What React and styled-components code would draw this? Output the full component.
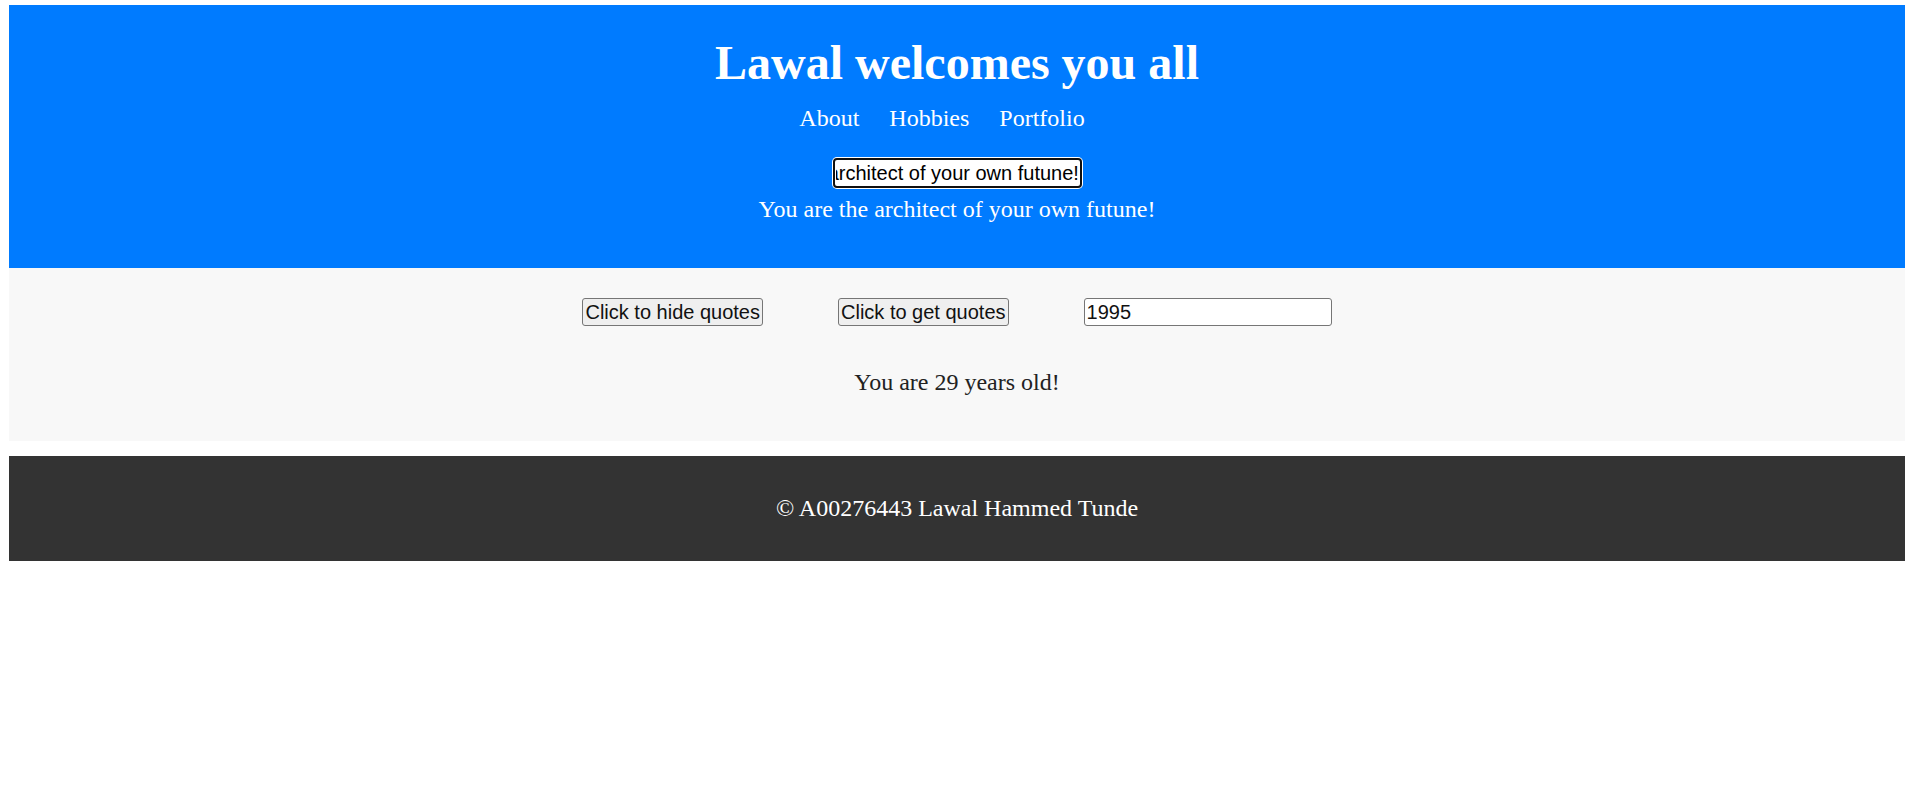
import React, { useLayoutEffect, useRef } from 'react';
import styled, { createGlobalStyle } from 'styled-components';

const GlobalStyle = createGlobalStyle`
  html, body {
    background: #ffffff;
  }
  body {
    margin: 5px 4px 0 9px;
    font-family: "Liberation Serif", "Times New Roman", serif;
  }
  * {
    box-sizing: border-box;
  }
`;

const Header = styled.header`
  background: #007bff;
  color: #ffffff;
  display: flex;
  flex-direction: column;
  align-items: center;
  padding: 30px 0 45px;
`;

const Title = styled.h1`
  margin: 0;
  font-size: 48px;
  line-height: 56px;
  font-weight: bold;
`;

const Nav = styled.nav`
  display: flex;
  justify-content: center;
  margin-top: 13px;
`;

const NavLink = styled.a`
  color: #ffffff;
  text-decoration: none;
  font-size: 24px;
  line-height: 28px;
  margin-right: 30px;
`;

const QuoteInput = styled.input`
  margin-top: 26px;
  width: 249px;
  height: 30px;
  padding: 0 1px;
  border: 2px solid #101010;
  border-radius: 4px;
  box-shadow: 0 0 0 1px #ffffff;
  outline: none;
  background: #ffffff;
  color: #000000;
  font-family: "Liberation Sans", Arial, sans-serif;
  font-size: 20px;
`;

const QuoteText = styled.p`
  margin: 7px 0 0;
  font-size: 24px;
  line-height: 28px;
`;

const Main = styled.main`
  background: #f8f8f8;
  display: flex;
  flex-direction: column;
  align-items: center;
  padding: 30px 0 45px;
`;

const Controls = styled.div`
  display: flex;
  justify-content: center;
  align-items: center;
  gap: 75px;
`;

const Button = styled.button`
  height: 28px;
  padding: 0 2px;
  border: 1px solid #767676;
  border-radius: 3px;
  background: #efefef;
  color: #111111;
  font-family: "Liberation Sans", Arial, sans-serif;
  font-size: 20px;
  line-height: 23px;
  cursor: pointer;
`;

const YearInput = styled.input`
  width: 248px;
  height: 28px;
  padding: 0 2px;
  border: 1px solid #767676;
  border-radius: 3px;
  background: #ffffff;
  color: #111111;
  font-family: "Liberation Sans", Arial, sans-serif;
  font-size: 20px;
  outline: none;
`;

const AgeText = styled.p`
  margin: 42px 0 0;
  font-size: 24px;
  line-height: 28px;
  color: #222222;
`;

const Footer = styled.footer`
  margin-top: 15px;
  background: #333333;
  color: #ffffff;
  text-align: center;
  padding: 38px 0 39px;
  font-size: 24px;
  line-height: 28px;
`;

const quote = 'You are the architect of your own futune!';

export default function App() {
  const quoteRef = useRef(null);

  useLayoutEffect(() => {
    const el = quoteRef.current;
    if (!el) return;
    const len = el.value.length;
    try {
      el.focus({ preventScroll: true });
      el.setSelectionRange(len, len);
    } catch (e) {
      /* ignore */
    }
    el.scrollLeft = el.scrollWidth;
  }, []);

  return (
    <>
      <GlobalStyle />
      <Header>
        <Title>Lawal welcomes you all</Title>
        <Nav>
          <NavLink href="#about">About</NavLink>
          <NavLink href="#hobbies">Hobbies</NavLink>
          <NavLink href="#portfolio">Portfolio</NavLink>
        </Nav>
        <QuoteInput ref={quoteRef} type="text" defaultValue={quote} />
        <QuoteText>{quote}</QuoteText>
      </Header>
      <Main>
        <Controls>
          <Button type="button">Click to hide quotes</Button>
          <Button type="button">Click to get quotes</Button>
          <YearInput type="text" defaultValue="1995" />
        </Controls>
        <AgeText>You are 29 years old!</AgeText>
      </Main>
      <Footer>© A00276443 Lawal Hammed Tunde</Footer>
    </>
  );
}
